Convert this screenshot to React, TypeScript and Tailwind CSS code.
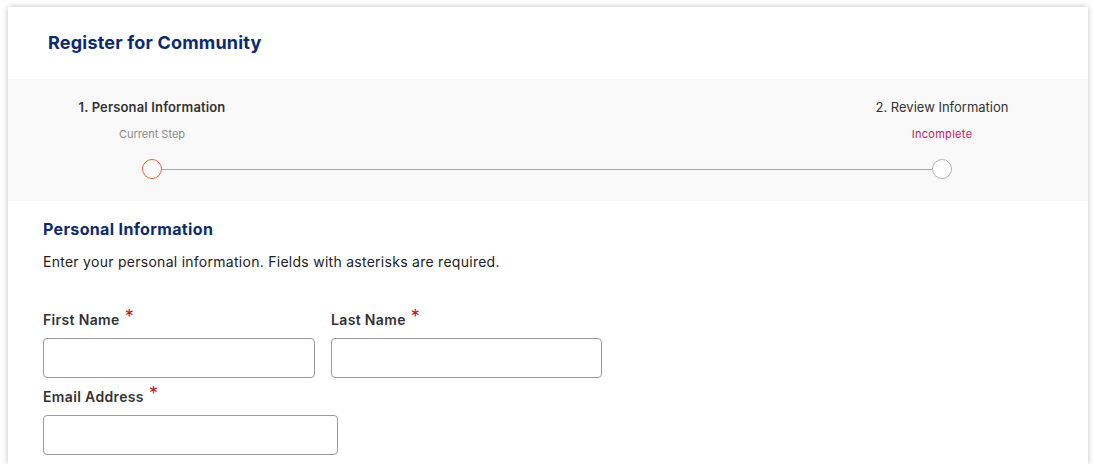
import React from "react";

const font = { fontFamily: "Inter, 'Noto Sans', sans-serif" };

function Field({ label, className }: { label: string; className: string }) {
  return (
    <div className={className}>
      <label className="flex h-5 items-center text-[14px] font-semibold tracking-[0.35px] text-[#333333]">
        {label}
        <span className="ml-[5px] -mt-[6px] text-[18px] font-normal text-[#c0141f]">*</span>
      </label>
      <input
        type="text"
        className="mt-[9px] h-10 w-full rounded-[4px] border border-[#9a9a9a] bg-white px-3 text-sm outline-none"
      />
    </div>
  );
}

export default function App() {
  return (
    <div className="min-h-[464px] w-full bg-white pt-[7px] pl-[8px]" style={font}>
      <div className="w-[1080px] bg-white shadow-[0_0_6px_rgba(0,0,0,0.25)]">
        {/* Header */}
        <div className="flex h-[72px] items-center pl-[40px] pb-[2px]">
          <h1 className="text-[18px] font-bold tracking-[0.2px] text-[#0c2a6e]">Register for Community</h1>
        </div>

        {/* Stepper */}
        <div className="h-[122px] bg-[#f9f9f9] pt-[18px]">
          <div className="flex justify-between pl-[44px] pr-[46px]">
            <div className="flex w-[200px] flex-col items-center">
              <span className="text-[13px] font-semibold leading-5 tracking-[0.15px] text-[#333333]">
                1. Personal Information
              </span>
              <span className="mt-[9px] text-[11px] leading-4 text-[#8a8a8a]">Current Step</span>
            </div>
            <div className="flex w-[200px] flex-col items-center">
              <span className="text-[13px] leading-5 text-[#333333]">2. Review Information</span>
              <span className="mt-[9px] text-[11px] leading-4 tracking-[0.3px] text-[#c2185b]">Incomplete</span>
            </div>
          </div>
          <div className="mt-[17px] flex items-center pl-[134px] pr-[136px]">
            <div className="h-5 w-5 rounded-full border border-[#e0623a] bg-white" />
            <div className="h-px flex-1 bg-[#a8a8a8]" />
            <div className="h-5 w-5 rounded-full border border-[#b5b5b5] bg-white" />
          </div>
        </div>

        {/* Body */}
        <div className="px-[35px] pt-[16px] pb-[9px]">
          <h2 className="text-[16px] font-bold leading-6 tracking-[0.35px] text-[#0c2a6e]">Personal Information</h2>
          <p className="mt-[11px] text-[14px] leading-5 tracking-[0.27px] text-[#222222]">
            Enter your personal information. Fields with asterisks are required.
          </p>
          <div className="mt-[37px] flex gap-4">
            <Field label="First Name" className="w-[272px]" />
            <Field label="Last Name" className="w-[271px]" />
          </div>
          <Field label="Email Address" className="mt-[8px] w-[295px]" />
        </div>
      </div>
    </div>
  );
}
